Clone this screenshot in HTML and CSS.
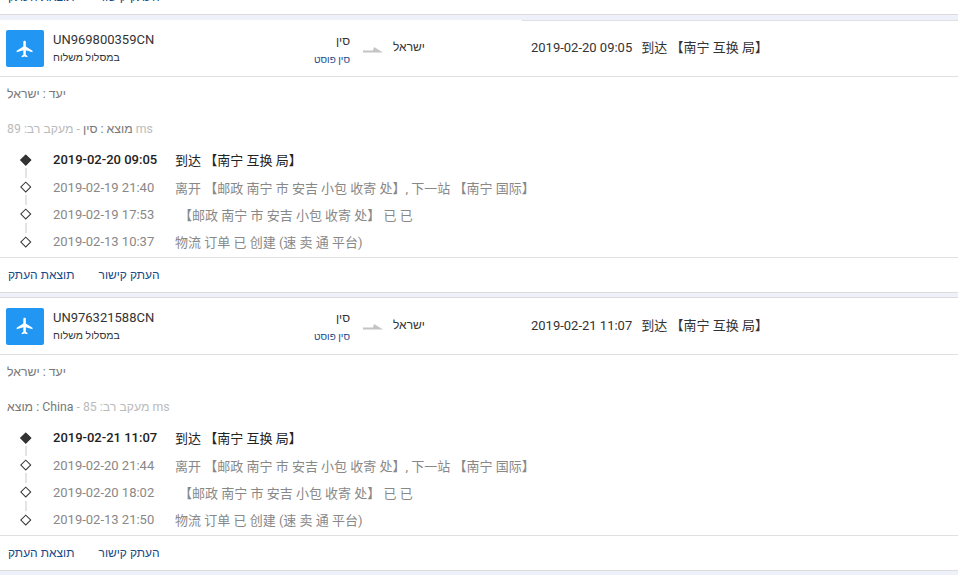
FILE: index.html
```html
<!DOCTYPE html>
<html lang="en">
<head>
  <meta charset="UTF-8">
  <meta name="viewport" content="width=device-width, initial-scale=1.0">
  <title>Tracking</title>
  <link rel="stylesheet" href="styles.css">
</head>
<body>
  <div class="list">
    <div class="card card-cut">
      <div class="actions">
        <a class="action">תוצאת העתק</a>
        <a class="action">העתק קישור</a>
      </div>
    </div>

    <div class="card card-first">
      <div class="head">
        <div class="plane">
          <svg width="20" height="20" viewBox="0 0 24 24"><path fill="#fff" d="M21 16v-2l-8-5V3.500C13 2.670 12.330 2 11.500 2S10 2.670 10 3.500V9l-8 5v2l8-2.500V19l-2 1.500V22l3.500-1 3.500 1v-1.500L13 19v-5.500l8 2.500z"/></svg>
        </div>
        <div class="num">
          <div class="code">UN969800359CN</div>
          <div class="status">במסלול משלוח</div>
        </div>
        <div class="from">
          <div class="country">סין</div>
          <div class="carrier">סין פוסט</div>
        </div>
        <svg class="arrow" width="20" height="6" viewBox="0 0 20 6"><path fill="#c4c4c4" d="M0 3.500h10L11 0l9 5.500H0z"/></svg>
        <div class="to">ישראל</div>
        <div class="last"><span class="last-date">2019-02-20 09:05</span><span>到达 【南宁 互换 局】</span></div>
      </div>
      <div class="info">
        <p class="dest">יעד : ישראל</p>
        <p class="meta"><span class="meta-dark">מוצא : סין</span> <span>- מעקב רב: 89</span> <span>ms</span></p>
      </div>
      <ul class="steps">
        <li class="step step-on"><span class="date">2019-02-20 09:05</span><span class="msg">到达 【南宁 互换 局】</span></li>
        <li class="step"><span class="date">2019-02-19 21:40</span><span class="msg">离开 【邮政 南宁 市 安吉 小包 收寄 处】, 下一站 【南宁 国际】</span></li>
        <li class="step"><span class="date">2019-02-19 17:53</span><span class="msg msg-in">【邮政 南宁 市 安吉 小包 收寄 处】 已 已</span></li>
        <li class="step"><span class="date">2019-02-13 10:37</span><span class="msg">物流 订单 已 创建 (速 卖 通 平台)</span></li>
      </ul>
      <div class="actions">
        <a class="action">תוצאת העתק</a>
        <a class="action">העתק קישור</a>
      </div>
    </div>

    <div class="card">
      <div class="head">
        <div class="plane">
          <svg width="20" height="20" viewBox="0 0 24 24"><path fill="#fff" d="M21 16v-2l-8-5V3.500C13 2.670 12.330 2 11.500 2S10 2.670 10 3.500V9l-8 5v2l8-2.500V19l-2 1.500V22l3.500-1 3.500 1v-1.500L13 19v-5.500l8 2.500z"/></svg>
        </div>
        <div class="num">
          <div class="code">UN976321588CN</div>
          <div class="status">במסלול משלוח</div>
        </div>
        <div class="from">
          <div class="country">סין</div>
          <div class="carrier">סין פוסט</div>
        </div>
        <svg class="arrow" width="20" height="6" viewBox="0 0 20 6"><path fill="#c4c4c4" d="M0 3.500h10L11 0l9 5.500H0z"/></svg>
        <div class="to">ישראל</div>
        <div class="last"><span class="last-date">2019-02-21 11:07</span><span>到达 【南宁 互换 局】</span></div>
      </div>
      <div class="info">
        <p class="dest">יעד : ישראל</p>
        <p class="meta"><span class="meta-dark">מוצא : China</span> <span>- מעקב רב: 85</span> <span>ms</span></p>
      </div>
      <ul class="steps">
        <li class="step step-on"><span class="date">2019-02-21 11:07</span><span class="msg">到达 【南宁 互换 局】</span></li>
        <li class="step"><span class="date">2019-02-20 21:44</span><span class="msg">离开 【邮政 南宁 市 安吉 小包 收寄 处】, 下一站 【南宁 国际】</span></li>
        <li class="step"><span class="date">2019-02-20 18:02</span><span class="msg msg-in">【邮政 南宁 市 安吉 小包 收寄 处】 已 已</span></li>
        <li class="step"><span class="date">2019-02-13 21:50</span><span class="msg">物流 订单 已 创建 (速 卖 通 平台)</span></li>
      </ul>
      <div class="actions">
        <a class="action">תוצאת העתק</a>
        <a class="action">העתק קישור</a>
      </div>
    </div>
  </div>
</body>
</html>
```

FILE: styles.css
```css
html, body {
  margin: 0;
  padding: 0;
  height: 575px;
  overflow: hidden;
}
body {
  background: #eef1fa;
  color: #333;
  font-family: Roboto, "Liberation Sans", "Noto Sans CJK SC", sans-serif;
  font-size: 13px;
}
p, ul {
  margin: 0;
  padding: 0;
}
.list {
  display: flex;
  flex-direction: column;
  gap: 4px;
}
.card {
  background: #fff;
  border-top: 1px solid #dcdcdc;
  border-bottom: 1px solid #dcdcdc;
}
.card-cut {
  height: 14px;
  border-top: 0;
  overflow: hidden;
}
.card-cut .actions {
  height: 14px;
  margin-top: -10px;
  border-top: 0;
}
/* first full card only has its top line on the right part */
.card-first {
  margin-top: 1px;
  padding-top: 1px;
  border-top: 0;
  background: linear-gradient(to right, #fff 522px, #dfdfe6 522px) top / 100% 1px no-repeat, #fff;
}
.card-first .head {
  height: 55px;
}

.head {
  display: flex;
  align-items: center;
  height: 56px;
  border-bottom: 1px solid #e0e0e0;
}
.plane {
  display: flex;
  align-items: center;
  justify-content: center;
  width: 38px;
  height: 37px;
  margin-left: 6px;
  background: #2196f3;
  border-radius: 2px;
}
.num {
  width: 240px;
  margin-left: 9px;
}
.code {
  color: #333;
  font-size: 13px;
  line-height: 16px;
}
.status {
  margin-top: 3px;
  color: #333;
  font-size: 10.5px;
  line-height: 14px;
}
.from {
  width: 57px;
  margin-top: 2px;
  text-align: right;
}
.country {
  color: #333;
  font-size: 12px;
  line-height: 16px;
}
.carrier {
  margin-top: 4px;
  color: #1a4a86;
  font-size: 10px;
  line-height: 14px;
}
.arrow {
  margin: 2px 10px 0 13px;
}
.to {
  width: 138px;
  margin-bottom: 3px;
  color: #333;
  font-size: 12px;
}
.last {
  margin-bottom: 4px;
  color: #333;
}
.last-date {
  margin-right: 9px;
}

.info {
  height: 69px;
  color: #bbb;
  font-size: 12.3px;
}
.dest {
  padding: 9px 0 0 7px;
  line-height: 16px;
  color: #777;
}
.meta {
  padding: 19px 0 0 7px;
  line-height: 16px;
}
.meta-dark {
  color: #777;
}

.steps {
  list-style: none;
  height: 111px;
}
.step {
  position: relative;
  display: flex;
  align-items: center;
  height: 27.4px;
  padding-left: 53px;
  color: #888;
}
.step::before {
  content: "";
  position: absolute;
  left: 22.3px;
  top: 9.5px;
  width: 5.5px;
  height: 5.5px;
  background: #fff;
  border: 1px solid #333;
  transform: rotate(45deg);
}
.step:not(:last-child)::after {
  content: "";
  position: absolute;
  left: 25px;
  top: 22px;
  width: 2px;
  height: 10px;
  background: #e4e4e4;
}
.step-on {
  color: #222;
}
.step-on .date {
  font-weight: 500;
}
.step-on::before {
  background: #333;
}
.date {
  width: 122px;
}
.msg-in {
  margin-left: 4px;
}

.actions {
  display: flex;
  gap: 24px;
  align-items: center;
  height: 34px;
  padding-left: 8px;
  border-top: 1px solid #e0e0e0;
}
.action {
  color: #1a4a86;
  font-size: 12px;
}
```
